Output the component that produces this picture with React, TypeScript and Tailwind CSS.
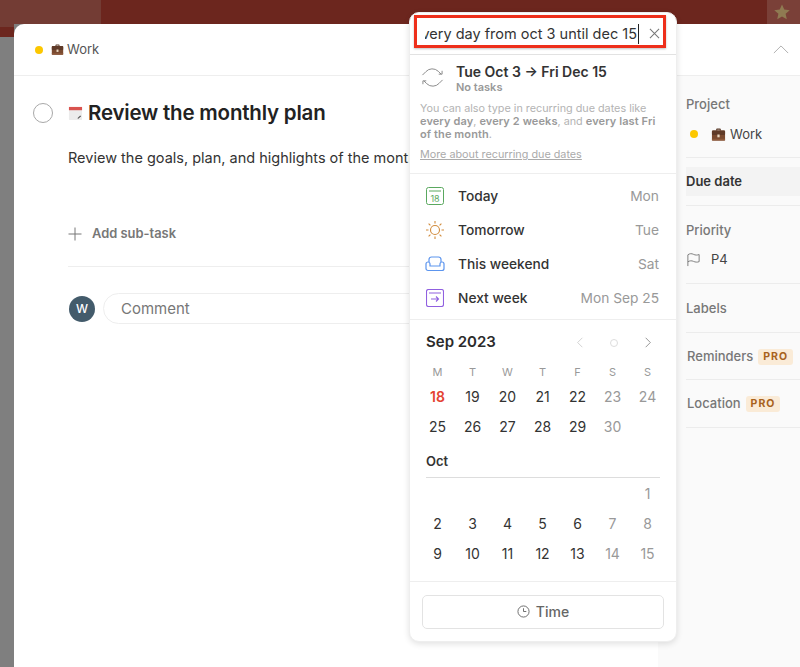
import React from "react";

const Briefcase = ({ className = "" }: { className?: string }) => (
  <svg viewBox="0 0 16 16" className={className}>
    <path d="M5.5 4V2.6c0-.5.4-.9.9-.9h3.2c.5 0 .9.4.9.9V4h-1.2V3H6.700v1z" fill="#5a3a28" />
    <rect x="1" y="3.800" width="14" height="10.700" rx="1.200" fill="#7a4a30" />
    <rect x="1" y="3.800" width="14" height="4.800" rx="1" fill="#5f3a28" />
    <rect x="6.800" y="8" width="2.400" height="3" fill="#e9d7c0" />
    <rect x="1" y="12.600" width="14" height="1.900" fill="#8e5a3c" />
  </svg>
);

const CalEmoji = () => (
  <svg viewBox="0 0 16 16" className="w-[15px] h-[15px] shrink-0">
    <rect x="1" y="1" width="14" height="14" rx="1" fill="#ececec" />
    <rect x="1" y="1" width="14" height="3.500" fill="#d9534f" />
    <path d="M10 13l3-3 1 1-3 2.500z" fill="#555" />
  </svg>
);

const Row = ({ icon, label, right }: { icon: React.ReactNode; label: string; right: string }) => (
  <div className="flex items-center h-[34px]">
    <div className="w-[20px] ml-[15px] mr-[13px] flex justify-center">{icon}</div>
    <span className="text-[13.750px] font-medium text-[#333]">{label}</span>
    <span className="ml-auto mr-[17px] text-[13.750px] text-[#999]">{right}</span>
  </div>
);

const dark = "text-[#333]";
const grey = "text-[#999]";

const Days = ({ days }: { days: { t: string; c: string }[] }) => (
  <div className="grid grid-cols-7 w-[245px] ml-[10px]">
    {days.map((d, i) => (
      <div key={i} className={`h-[30px] flex items-center justify-center text-[14px] ${d.c}`}>
        {d.t}
      </div>
    ))}
  </div>
);

const mk = (arr: (string | number)[], opts: Record<string, string> = {}) =>
  arr.map((v, i) => ({
    t: v === "" ? "" : String(v),
    c: opts[String(v)] ?? (i % 7 >= 5 ? grey : dark),
  }));

const Pro = () => (
  <span className="ml-[5px] h-[16px] px-[5px] rounded-[3px] bg-[#faebd7] text-[#a8621c] text-[10.500px] font-bold tracking-[1px] flex items-center">
    PRO
  </span>
);

export default function App() {
  return (
    <div
      className="relative w-[800px] h-[667px] overflow-hidden flex flex-col bg-[#7f7f7f]"
      style={{ fontFamily: "Inter, 'Liberation Sans', sans-serif" }}
    >
      {/* top bar */}
      <div className="h-[24px] shrink-0 bg-[#6c261e] flex justify-between">
        <div className="w-[101px] bg-[#733c34]" />
        <div className="w-[33px] bg-[#7a4038] flex items-center justify-center pr-[3px]">
          <svg viewBox="0 0 24 24" className="w-[18px] h-[18px]" fill="#8f7a52">
            <path d="M12 2l3 6.800 7.300.7-5.500 4.900 1.600 7.200L12 17.900l-6.400 3.700 1.600-7.200L1.700 9.500 9 8.800z" />
          </svg>
        </div>
      </div>

      <div className="flex flex-1 min-h-0">
        {/* left gutter */}
        <div className="w-[14px] shrink-0 flex flex-col">
          <div className="h-[3px] bg-[#733c34]" />
          <div className="h-[10px] bg-[#6c261e]" />
          <div className="flex-1 bg-[#7f7f7f]" />
        </div>

        {/* modal */}
        <div className="flex-1 flex flex-col rounded-tl-[10px] bg-white overflow-hidden">
          <div className="h-[52px] shrink-0 border-b border-[#eeeeee] flex items-center pl-[21px] pr-[10px]">
            <span className="w-[8px] h-[8px] rounded-full bg-[#fcc700]" />
            <Briefcase className="w-[13px] h-[13px] ml-[8px]" />
            <span className="ml-[3px] text-[13px] text-[#555]">Work</span>
            <svg viewBox="0 0 18 10" className="ml-auto mr-[1px] w-[16px] h-[9px]" fill="none" stroke="#a8a8a8" strokeWidth="1">
              <path d="M1 9l8-8 8 8" />
            </svg>
          </div>

          <div className="flex flex-1 min-h-0">
            {/* main */}
            <div className="flex-1 min-w-0 overflow-hidden">
              <div className="flex items-center pl-[19px] mt-[26px] h-[22px]">
                <span className="w-[20px] h-[20px] rounded-full border border-[#a8a8a8] shrink-0" />
                <span className="ml-[15px]"><CalEmoji /></span>
                <span className="ml-[5px] text-[20.500px] font-semibold text-[#222] tracking-[-0.2px] whitespace-nowrap">Review the monthly plan</span>
              </div>
              <div className="ml-[54px] mt-[23px] h-[22px] flex items-center text-[14.500px] text-[#333] whitespace-nowrap">
                Review the goals, plan, and highlights of the month.
              </div>
              <div className="ml-[54px] mt-[52px] h-[26px] flex items-center">
                <svg viewBox="0 0 14 14" className="w-[14px] h-[14px]" fill="none" stroke="#777" strokeWidth="1">
                  <path d="M7 .5v13M.5 7h13" />
                </svg>
                <span className="ml-[10px] text-[12.900px] font-semibold text-[#777]">Add sub-task</span>
              </div>
              <div className="ml-[54px] mt-[19px] h-px bg-[#eeeeee]" />
              <div className="ml-[55px] mt-[26px] flex items-center">
                <div className="w-[26px] h-[26px] rounded-full bg-[#435b6b] text-white text-[12px] font-medium flex items-center justify-center">W</div>
                <div className="ml-[8px] flex-1 h-[31px] rounded-l-[16px] border border-[#eeeeee] flex items-center pl-[17px] pt-[1px] text-[15px] text-[#777]">
                  Comment
                </div>
              </div>
            </div>

            {/* sidebar */}
            <div className="w-[142px] shrink-0 bg-[#fafafa] pl-[28px] flex flex-col text-[13px]">
              <div className="h-[82px] pt-[19px] border-b border-[#ececec]">
                <div className="font-medium text-[#777]">Project</div>
                <div className="flex items-center mt-[10px] text-[#444]">
                  <span className="w-[8px] h-[8px] rounded-full bg-[#fcc700] ml-[4px]" />
                  <Briefcase className="w-[15px] h-[15px] ml-[13px]" />
                  <span className="ml-[4px]">Work</span>
                </div>
              </div>
              <div className="h-[48px] border-b border-[#ececec] flex items-center">
                <div className="w-full h-[29px] bg-[#f3f3f3] flex items-center font-semibold text-[#333]">Due date</div>
              </div>
              <div className="h-[78px] pt-[15px] border-b border-[#ececec]">
                <div className="font-medium text-[#777]">Priority</div>
                <div className="flex items-center mt-[9px] text-[#444]">
                  <svg viewBox="0 0 16 16" className="w-[15px] h-[15px]" fill="none" stroke="#777" strokeWidth="1">
                    <path d="M2 15V3c2-1.500 4-1.500 6-.5s4 1 6 .2v7.600c-2 .8-4 .6-6-.3s-4-.8-6 .5" />
                  </svg>
                  <span className="ml-[10px]">P4</span>
                </div>
              </div>
              <div className="h-[49px] pt-[1px] border-b border-[#ececec] flex items-center font-medium text-[#777]">Labels</div>
              <div className="h-[47px] pt-[1px] border-b border-[#ececec] flex items-center font-medium text-[#777]">
                <span className="ml-[1px]">Reminders</span>
                <Pro />
              </div>
              <div className="h-[48px] pt-[1px] border-b border-[#ececec] flex items-center font-medium text-[#777]">
                <span className="ml-[1px]">Location</span>
                <Pro />
              </div>
            </div>
          </div>
        </div>
      </div>

      {/* date picker popover */}
      <div className="absolute left-[409px] top-[12px] w-[268px] h-[630px] bg-white rounded-[10px] border border-[#eeeeee] shadow-[0_2px_6px_rgba(0,0,0,0.12)] flex flex-col overflow-hidden">
        <div className="h-[42px] shrink-0 border-b border-[#e2e2e2] flex items-center">
          <div className="ml-[15px] w-[214px] overflow-hidden flex justify-end">
            <span className="text-[14.500px] text-[#333] whitespace-nowrap border-r border-[#222] pr-[1px] leading-[20px]">
              every day from oct 3 until dec 15
            </span>
          </div>
          <svg viewBox="0 0 12 12" className="ml-[10px] w-[11px] h-[11px]" fill="none" stroke="#777" strokeWidth="1.100">
            <path d="M1 1l10 10M11 1L1 11" />
          </svg>
        </div>

        <div className="h-[119px] shrink-0 border-b border-[#eeeeee]">
          <div className="flex pt-[8px]">
            <svg viewBox="0 0 24 24" className="w-[23px] h-[23px] ml-[11px] mt-[3px]" fill="none" stroke="#888" strokeWidth="1">
              <path d="M1.500 9.500l3.500-3.500a9 9 0 0 1 13-.500l3 3M22.500 14.500L19 18a9 9 0 0 1-13 .5l-3-3" />
              <path d="M22 5v3.500h-3.500M2 19v-3.500h3.500" />
            </svg>
            <div className="ml-[12px]">
              <div className="text-[14px] font-semibold text-[#333] leading-[17px]">Tue Oct 3 → Fri Dec 15</div>
              <div className="text-[11px] font-semibold text-[#999] leading-[13px] mt-[1px]">No tasks</div>
            </div>
          </div>
          <div className="mx-[10px] mt-[8px] text-[10.800px] leading-[13px] text-[#b3b3b3] whitespace-nowrap">
            You can also type in recurring due dates like<br />
            <b className="text-[11px] font-semibold text-[#999] tracking-[0.1px]">every day</b>, <b className="text-[11px] font-semibold text-[#999] tracking-[0.1px]">every 2 weeks</b>, and <b className="text-[11px] font-semibold text-[#999] tracking-[0.1px]">every last Fri</b><br />
            <b className="text-[11px] font-semibold text-[#999] tracking-[0.1px]">of the month</b>.
          </div>
          <div className="mx-[10px] mt-[7px] text-[10.800px] leading-[13px] text-[#aaa] underline whitespace-nowrap">More about recurring due dates</div>
        </div>

        <div className="shrink-0 pt-[5px] pb-[4px] border-b border-[#eeeeee]">
          <Row
            label="Today"
            right="Mon"
            icon={
              <svg viewBox="0 0 18 18" className="w-[18px] h-[18px]" fill="none" stroke="#5aa85f" strokeWidth="1">
                <rect x=".5" y=".5" width="17" height="17" rx="2" />
                <path d="M3 4h12" />
                <text x="9" y="14.500" textAnchor="middle" fontSize="9" fill="#5aa85f" stroke="none">18</text>
              </svg>
            }
          />
          <Row
            label="Tomorrow"
            right="Tue"
            icon={
              <svg viewBox="0 0 20 20" className="w-[20px] h-[20px]" fill="none" stroke="#d18b3c" strokeWidth="1.100">
                <circle cx="10" cy="10" r="4.500" />
                <path d="M10 1v2.500M10 16.500V19M1 10h2.500M16.500 10H19M3.600 3.600l1.800 1.800M14.600 14.600l1.800 1.800M3.600 16.400l1.800-1.800M14.600 5.400l1.800-1.800" />
              </svg>
            }
          />
          <Row
            label="This weekend"
            right="Sat"
            icon={
              <svg viewBox="0 0 20 16" className="w-[20px] h-[16px]" fill="none" stroke="#5c95ee" strokeWidth="1.200">
                <path d="M4 6V3.500A2.500 2.500 0 0 1 6.500 1h7A2.500 2.500 0 0 1 16 3.500V6" />
                <path d="M1 8a2 2 0 0 1 4 0v2h10V8a2 2 0 0 1 4 0v4.500a2 2 0 0 1-2 2H3a2 2 0 0 1-2-2z" />
              </svg>
            }
          />
          <Row
            label="Next week"
            right="Mon Sep 25"
            icon={
              <svg viewBox="0 0 18 18" className="w-[18px] h-[18px]" fill="none" stroke="#9060e0" strokeWidth="1.100">
                <rect x=".5" y=".5" width="17" height="17" rx="2" />
                <path d="M3 4h12M5 10h7.500M10 7.500l2.500 2.500-2.500 2.500" />
              </svg>
            }
          />
        </div>

        <div className="flex-1 min-h-0 border-b border-[#eeeeee]">
          <div className="flex items-center h-[44px] pl-[16px] pt-[1px]">
            <span className="text-[15px] font-semibold text-[#2b2b2b]">Sep 2023</span>
            <svg viewBox="0 0 10 14" className="ml-[80px] w-[8px] h-[11px]" fill="none" stroke="#ccc" strokeWidth="1.100"><path d="M8 1L2 7l6 6" /></svg>
            <span className="ml-[26px] w-[8px] h-[8px] rounded-full border border-[#ddd]" />
            <svg viewBox="0 0 10 14" className="ml-[26px] w-[8px] h-[11px]" fill="none" stroke="#888" strokeWidth="1.100"><path d="M2 1l6 6-6 6" /></svg>
          </div>
          <div className="grid grid-cols-7 w-[245px] ml-[10px] h-[17px] items-center">
            {["M", "T", "W", "T", "F", "S", "S"].map((d, i) => (
              <div key={i} className="text-center text-[11px] text-[#999]">{d}</div>
            ))}
          </div>
          <Days days={mk([18, 19, 20, 21, 22, 23, 24, 25, 26, 27, 28, 29, 30, ""], { "18": "text-[#e44232] font-semibold", "30": grey })} />
          <div className="mx-[16px] mt-[12px] h-[25px] border-b border-[#dddddd] text-[13px] font-semibold text-[#333] leading-[16px]">Oct</div>
          <Days days={mk(["", "", "", "", "", "", 1, 2, 3, 4, 5, 6, 7, 8, 9, 10, 11, 12, 13, 14, 15])} />
        </div>

        <div className="h-[59px] shrink-0 flex items-center justify-center">
          <div className="w-[242px] h-[34px] rounded-[5px] border border-[#e3e3e3] flex items-center justify-center gap-[6px] text-[14px] font-medium text-[#666]">
            <svg viewBox="0 0 14 14" className="w-[13px] h-[13px]" fill="none" stroke="#666" strokeWidth="1">
              <circle cx="7" cy="7" r="6" />
              <path d="M7 3.500V7h3" />
            </svg>
            Time
          </div>
        </div>
      </div>

      {/* red annotation box */}
      <div className="absolute left-[414px] top-[15px] w-[252px] h-[33px] border-[3px] border-[#ee2f1b] shadow-[0_1px_2px_rgba(0,0,0,0.25)] pointer-events-none" />
    </div>
  );
}
